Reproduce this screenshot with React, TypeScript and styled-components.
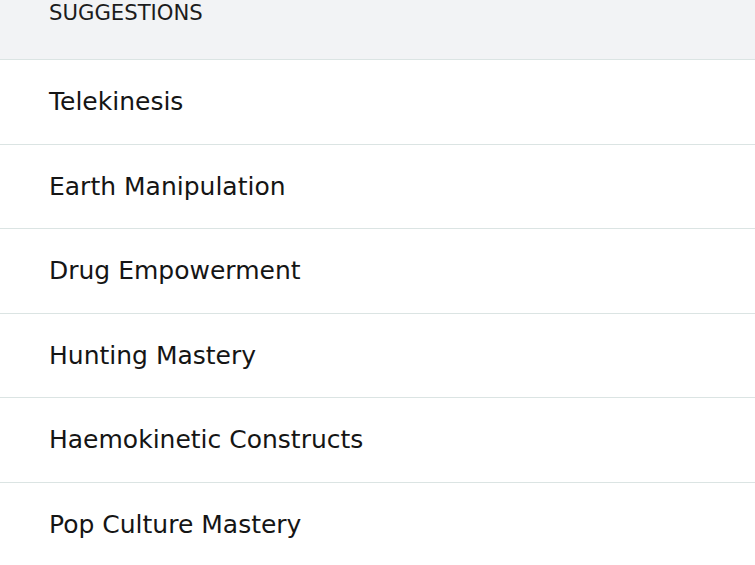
import React from "react";
import styled, { createGlobalStyle } from "styled-components";

const Global = createGlobalStyle`
  html, body { margin: 0; padding: 0; background: #ffffff; }
  body { font-family: "DejaVu Sans", "Noto Sans", sans-serif; color: #1c1c1c; overflow: hidden; }
`;

const List = styled.div`
  display: flex;
  flex-direction: column;
  width: 755px;
`;

const Header = styled.div`
  height: 60px;
  box-sizing: border-box;
  background: #f2f3f5;
  border-bottom: 1px solid #dbe4e3;
  padding: 0 0 0 49px;
  font-size: 21.2px;
  line-height: 26px;
  color: #1c1c1c;
`;

const Row = styled.div`
  height: 84.5px;
  box-sizing: border-box;
  border-bottom: 1px solid #dbe4e3;
  display: flex;
  align-items: center;
  padding-left: 49px;
  font-size: 25px;
  color: #151515;
`;

const items = [
  "Telekinesis",
  "Earth Manipulation",
  "Drug Empowerment",
  "Hunting Mastery",
  "Haemokinetic Constructs",
  "Pop Culture Mastery",
];

export default function App() {
  return (
    <>
      <Global />
      <List>
        <Header>SUGGESTIONS</Header>
        {items.map((t) => (
          <Row key={t}>{t}</Row>
        ))}
      </List>
    </>
  );
}
